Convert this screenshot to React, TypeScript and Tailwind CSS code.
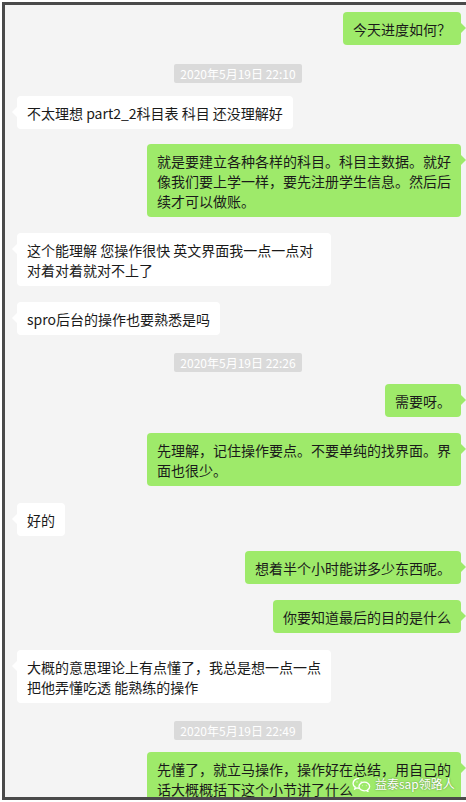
import React from "react";

type Msg =
  | { kind: "time"; text: string; mt: string }
  | { kind: "me" | "other"; text: string; mt: string };

const messages: Msg[] = [
  { kind: "me", text: "今天进度如何？", mt: "mt-[7px]" },
  { kind: "time", text: "2020年5月19日 22:10", mt: "mt-[19px]" },
  { kind: "other", text: "不太理想 part2_2科目表 科目 还没理解好", mt: "mt-[13px]" },
  {
    kind: "me",
    text: "就是要建立各种各样的科目。科目主数据。就好像我们要上学一样，要先注册学生信息。然后后续才可以做账。",
    mt: "mt-[15px]",
  },
  { kind: "other", text: "这个能理解 您操作很快 英文界面我一点一点对对着对着就对不上了", mt: "mt-[16px]" },
  { kind: "other", text: "spro后台的操作也要熟悉是吗", mt: "mt-[16px]" },
  { kind: "time", text: "2020年5月19日 22:26", mt: "mt-[18px]" },
  { kind: "me", text: "需要呀。", mt: "mt-[12px]" },
  { kind: "me", text: "先理解，记住操作要点。不要单纯的找界面。界面也很少。", mt: "mt-[16px]" },
  { kind: "other", text: "好的", mt: "mt-[17px]" },
  { kind: "me", text: "想着半个小时能讲多少东西呢。", mt: "mt-[15px]" },
  { kind: "me", text: "你要知道最后的目的是什么", mt: "mt-[16px]" },
  {
    kind: "other",
    text: "大概的意思理论上有点懂了，我总是想一点一点把他弄懂吃透 能熟练的操作",
    mt: "mt-[17px]",
  },
  { kind: "time", text: "2020年5月19日 22:49", mt: "mt-[18px]" },
  {
    kind: "me",
    text: "先懂了，就立马操作，操作好在总结，用自己的话大概概括下这个小节讲了什么",
    mt: "mt-[12px]",
  },
];

const font = { fontFamily: '"Noto Sans CJK SC", "Noto Sans", sans-serif' };

// watermark logo: two overlapping chat bubbles
const WeChatLogo = () => (
  <svg width="19" height="15" viewBox="0 0 20 16" fill="none" stroke="white" strokeWidth="1.4">
    <path d="M7.5 1.5c-3.6 0-6.5 2.4-6.5 5.3 0 1.6.9 3 2.3 4l-.5 1.9 2.2-1.1c.8.2 1.6.4 2.5.4" />
    <path d="M13 5.5c-3.2 0-5.7 2.1-5.7 4.6s2.5 4.6 5.7 4.6c.7 0 1.4-.1 2-.3l1.9 1-.4-1.7c1.3-.9 2.2-2.2 2.2-3.6 0-2.5-2.5-4.6-5.7-4.6z" />
    <circle cx="5.2" cy="5.2" r=".6" fill="white" stroke="none" />
    <circle cx="9.6" cy="5.2" r=".6" fill="white" stroke="none" />
    <circle cx="11" cy="9.4" r=".5" fill="white" stroke="none" />
    <circle cx="15" cy="9.4" r=".5" fill="white" stroke="none" />
  </svg>
);

const Bubble = ({ msg }: { msg: Msg }) => {
  if (msg.kind === "time") {
    return (
      <div className={`flex justify-center ${msg.mt}`}>
        <span className="bg-[#dadada] text-white text-[12px] leading-[19px] h-[19px] px-[6px] rounded-[2px]">
          {msg.text}
        </span>
      </div>
    );
  }
  const me = msg.kind === "me";
  return (
    <div className={`flex ${me ? "justify-end pr-[10px]" : "justify-start pl-[12px]"} ${msg.mt}`}>
      <div
        className={`relative max-w-[314px] px-[10px] pt-[7px] pb-[6px] rounded-[4px] text-[14px] leading-[20px] text-[#1a1a1a] break-all ${
          me ? "bg-[#9eea6a]" : "bg-white"
        }`}
      >
        {me ? (
          <span className="absolute right-[-5px] top-[11px] w-0 h-0 border-y-[5px] border-y-transparent border-l-[5px] border-l-[#9eea6a]" />
        ) : (
          <span className="absolute left-[-5px] top-[11px] w-0 h-0 border-y-[5px] border-y-transparent border-r-[5px] border-r-white" />
        )}
        {msg.text}
      </div>
    </div>
  );
};

export default function App() {
  return (
    <div className="w-[466px] h-[802px] overflow-hidden bg-white" style={font}>
      <div className="relative ml-[2px] mt-[2px] w-[472px] h-[798px] border-[3px] border-[#4a4a4a] bg-[#f4f4f4] overflow-hidden">
        <div className="flex flex-col">
          {messages.map((m, i) => (
            <Bubble key={i} msg={m} />
          ))}
        </div>
        <div className="absolute left-[347px] top-[771px] flex items-center gap-[4px] text-white text-[12px] leading-[16px] [text-shadow:0_0_2px_rgba(0,0,0,0.45)]">
          <WeChatLogo />
          <span>益泰sap领路人</span>
        </div>
      </div>
    </div>
  );
}
